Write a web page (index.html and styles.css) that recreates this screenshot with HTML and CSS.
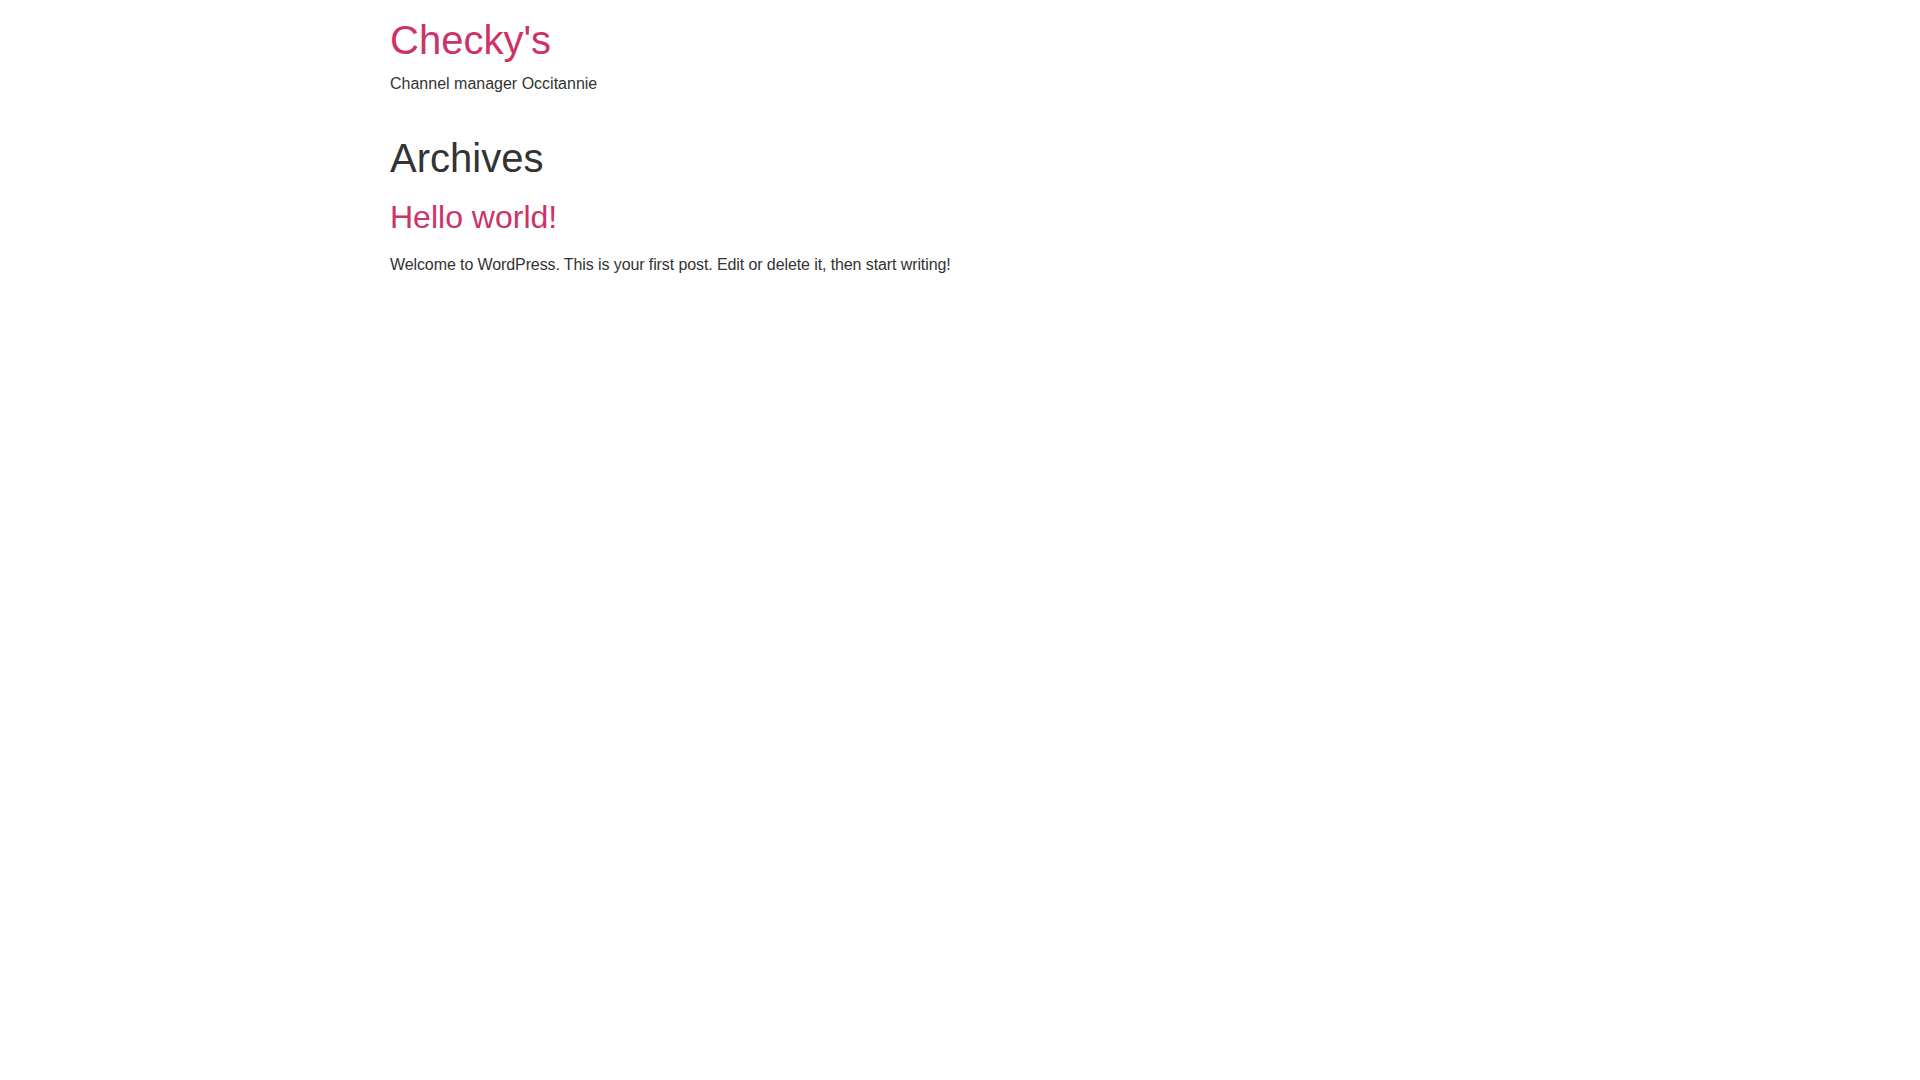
FILE: index.html
```
<!DOCTYPE html>
<html lang="en">
<head>
<meta charset="utf-8">
<title>Archives - Checky's</title>
<link rel="stylesheet" href="styles.css">
</head>
<body class="page-body">
<header class="site-header">
  <div class="site-branding">
    <h1 class="site-title"><a class="site-link" href="#" rel="home">Checky's</a></h1>
    <p class="site-description">Channel manager Occitannie</p>
  </div>
</header>
<main class="site-main">
  <header class="page-header">
    <h1 class="page-title">Archives</h1>
  </header>
  <div class="page-content">
    <article class="post">
      <h2 class="entry-title"><a class="entry-link" href="#">Hello world!</a></h2>
      <p class="entry-excerpt">Welcome to WordPress. This is your first post. Edit or delete it, then start writing!</p>
    </article>
  </div>
</main>
</body>
</html>
```
FILE: styles.css
```
html {
  line-height: 1.15;
}

.page-body {
  margin: 0;
  font-family: "Liberation Sans", Arial, Helvetica, sans-serif;
  font-size: 16px;
  font-weight: 400;
  line-height: 1.5;
  color: #333333;
  background-color: #ffffff;
}

.site-header,
.site-main {
  max-width: 1140px;
  margin-left: auto;
  margin-right: auto;
}

.site-header {
  display: flex;
  flex-wrap: wrap;
  justify-content: space-between;
  padding-top: 16px;
  padding-bottom: 16px;
}

.site-branding {
  display: flex;
  flex-direction: column;
}

.site-title {
  margin: 0 0 8px;
  font-size: 40px;
  font-weight: 500;
  line-height: 1.2;
}

.site-link,
.entry-link {
  color: #cc3366;
  text-decoration: none;
  background-color: transparent;
}

.site-description {
  margin: 0 0 14.4px;
}

.page-title {
  margin: 8px 0 16px;
  font-size: 40px;
  font-weight: 500;
  line-height: 1.2;
}

.entry-title {
  margin: 8px 0 16px;
  font-size: 32px;
  font-weight: 500;
  line-height: 1.2;
}

.entry-excerpt {
  margin: 0 0 14.4px;
  letter-spacing: -0.1px;
}
```
